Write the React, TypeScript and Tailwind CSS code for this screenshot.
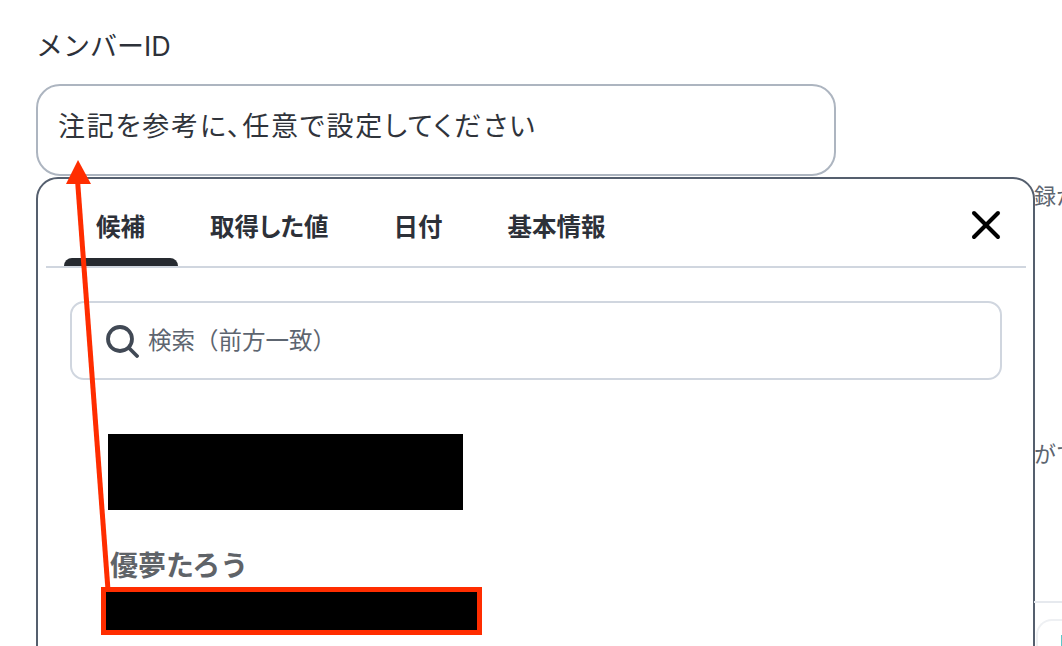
import { X } from "lucide-react";

const jp = "font-['Inter','Noto_Sans_CJK_JP',sans-serif]";

const tabs = ["候補", "取得した値", "日付", "基本情報"];

const Annotation = () => (
  <svg className="absolute left-0 top-0 pointer-events-none" width="1062" height="646" viewBox="0 0 1062 646">
    <line x1="77.5" y1="180" x2="108" y2="590" stroke="#ff2d00" strokeWidth="5" />
    <polygon points="78,160 91,184 66,184" fill="#ff2d00" />
  </svg>
);

const App = () => {
  return (
    <div className={`${jp} relative h-[646px] w-[1062px] overflow-hidden bg-white`}>
      <div className="pl-[36px] pt-[28px]">
        <label className="block h-[38px] text-[27px] leading-[38px] text-[#2d3139]">メンバーID</label>
        <div className="mt-[18px] flex h-[92px] w-[800px] items-center rounded-[24px] border-2 border-[#adb5c0] pl-[20px] pb-[6px] text-[27px] tracking-[1.8px] text-[#30343b] [font-feature-settings:'palt']">
          注記を参考に、任意で設定してください
        </div>

        <div className="mt-[1px] flex">
          {/* suggestion panel */}
          <div className="h-[500px] w-[999px] shrink-0 rounded-t-[22px] border-2 border-[#555f6e] bg-white pl-[8px] pr-[7px]">
            <div className="flex h-[89px] items-start border-b-2 border-[#d0d6df] pl-[18px]">
              {tabs.map((tab, i) => (
                <div key={tab} className={`relative h-[87px] pl-[32px] pr-[33px] pt-[30px] text-[24.5px] leading-[36px] font-bold text-[#2d3139] [font-feature-settings:'palt'] ${i === 0 ? "w-[114px]" : ""}`}>
                  {tab}
                  {i === 0 && <div className="absolute bottom-0 left-0 h-[8px] w-[114px] rounded-t-[8px] bg-[#262a30]" />}
                </div>
              ))}
              <X className="ml-auto mr-[16px] mt-[22px] text-black" size={48} strokeWidth={2} />
            </div>

            <div className="mx-[24px] mt-[33px] flex h-[79px] w-[932px] items-center rounded-[14px] border-2 border-[#d0d6df] pl-[33px]">
              <svg width="34" height="34" viewBox="0 0 34 34" fill="none" stroke="#414955" strokeWidth="3.8" strokeLinecap="round">
                <circle cx="15" cy="15" r="12" />
                <line x1="24" y1="24" x2="32" y2="32" />
              </svg>
              <span className="ml-[9px] text-[23.5px] text-[#5d6570]">検索（前方一致）</span>
            </div>

            <div className="ml-[62px] mt-[54px] h-[76px] w-[355px] bg-black" />
            <div className="ml-[64px] mt-[36px] h-[40px] text-[28px] leading-[40px] font-semibold text-[#5f6368]">優夢たろう</div>
            <div className="ml-[55px] mt-[1px] h-[48px] w-[381px] border-[5px] border-[#ff2d00] bg-black" />
          </div>

          {/* page text behind the panel */}
          <div className="-ml-[1px] min-w-0 flex-1 overflow-hidden whitespace-nowrap text-[22px] text-[#5d6570]">
            <p className="mt-[3px] h-[33px] leading-[33px]">録か</p>
            <p className="mt-[225px] h-[33px] leading-[33px]">がて</p>
            <div className="mt-[130px] h-[50px] border-t-2 border-[#e6e9ee]">
              <div className="ml-[2px] mt-[16px] h-[40px] rounded-tl-[16px] border-l-2 border-t-2 border-[#eef0f3]">
                <div className="ml-[23px] mt-[14px] h-[12px] w-[2px] bg-[#5cc8c8]" />
              </div>
            </div>
          </div>
        </div>
      </div>
      <Annotation />
    </div>
  );
};

export default App;
